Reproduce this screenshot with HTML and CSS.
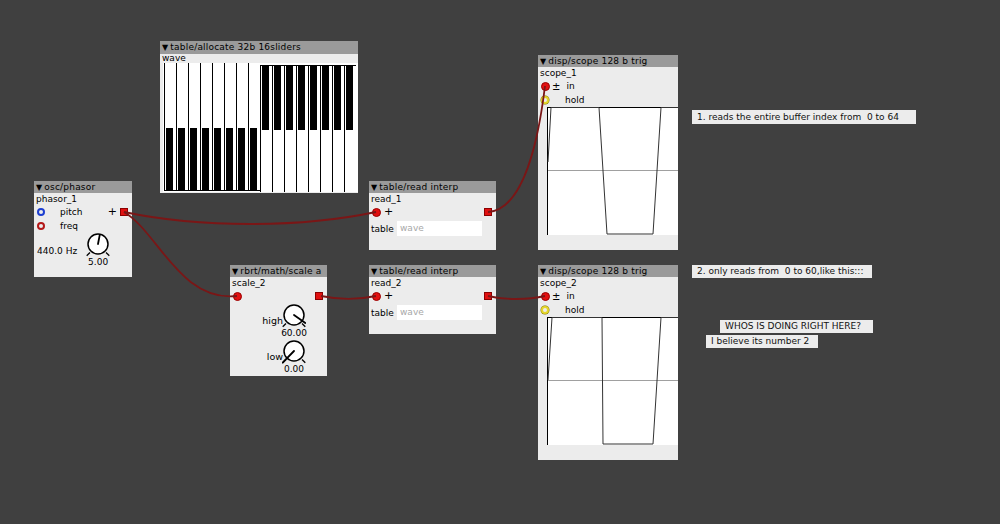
FILE: index.html
```html
<!DOCTYPE html>
<html>
<head>
<meta charset="utf-8">
<link rel="stylesheet" href="styles.css">
</head>
<body>
<div class="canvas">

  <div class="obj n-alloc">
    <div class="hdr"><span class="tri">▼</span>table/allocate 32b 16sliders</div>
    <div class="iname">wave</div>
    <div class="sliders">
      <div class="sl lo"><i></i></div><div class="sl lo"><i></i></div><div class="sl lo"><i></i></div><div class="sl lo"><i></i></div>
      <div class="sl lo"><i></i></div><div class="sl lo"><i></i></div><div class="sl lo"><i></i></div><div class="sl lo"><i></i></div>
      <div class="sl hi"><i></i></div><div class="sl hi"><i></i></div><div class="sl hi"><i></i></div><div class="sl hi"><i></i></div>
      <div class="sl hi"><i></i></div><div class="sl hi"><i></i></div><div class="sl hi"><i></i></div><div class="sl hi"><i></i></div>
    </div>
  </div>

  <div class="obj n-phasor">
    <div class="hdr"><span class="tri">▼</span>osc/phasor</div>
    <div class="iname">phasor_1</div>
    <div class="row">
      <span class="ring blue"></span><span class="lbl">pitch</span>
      <span class="plus">+</span><span class="outlet"></span>
    </div>
    <div class="row">
      <span class="ring red"></span><span class="lbl">freq</span>
    </div>
    <div class="knobrow">
      <span class="val">440.0 Hz</span>
      <div class="knob">
        <svg width="24" height="24" viewBox="0 0 24 24">
          <line x1="0.7" y1="22.7" x2="4" y2="19.5" class="foot"/>
          <line x1="23.3" y1="22.7" x2="20" y2="19.5" class="foot"/>
          <circle cx="12" cy="11" r="10" class="dial"/>
          <line x1="12" y1="11" x2="13.7" y2="2.2" class="tick"/>
        </svg>
        <span class="kval">5.00</span>
      </div>
    </div>
  </div>

  <div class="obj n-read1">
    <div class="hdr"><span class="tri">▼</span>table/read interp</div>
    <div class="iname">read_1</div>
    <div class="row">
      <span class="inlet"></span><span class="plus2">+</span>
      <span class="outlet push"></span>
    </div>
    <div class="trow"><span class="tlbl">table</span><span class="field">wave</span></div>
  </div>

  <div class="obj n-read2">
    <div class="hdr"><span class="tri">▼</span>table/read interp</div>
    <div class="iname">read_2</div>
    <div class="row">
      <span class="inlet"></span><span class="plus2">+</span>
      <span class="outlet push"></span>
    </div>
    <div class="trow"><span class="tlbl">table</span><span class="field">wave</span></div>
  </div>

  <div class="obj n-scale">
    <div class="hdr"><span class="tri">▼</span>rbrt/math/scale a</div>
    <div class="iname">scale_2</div>
    <div class="row">
      <span class="inlet"></span>
      <span class="outlet push"></span>
    </div>
    <div class="kb">
      <span class="klbl">high</span>
      <div class="knob">
        <svg width="24" height="24" viewBox="0 0 24 24">
          <line x1="0.7" y1="22.7" x2="4" y2="19.5" class="foot"/>
          <line x1="23.3" y1="22.7" x2="20" y2="19.5" class="foot"/>
          <circle cx="12" cy="11" r="10" class="dial"/>
          <line x1="12" y1="11" x2="23.3" y2="19" class="tick"/>
        </svg>
        <span class="kval">60.00</span>
      </div>
    </div>
    <div class="kb low">
      <span class="klbl">low</span>
      <div class="knob">
        <svg width="24" height="24" viewBox="0 0 24 24">
          <line x1="0.7" y1="22.7" x2="4" y2="19.5" class="foot"/>
          <line x1="23.3" y1="22.7" x2="20" y2="19.5" class="foot"/>
          <circle cx="12" cy="11" r="10" class="dial"/>
          <line x1="12" y1="11" x2="0.7" y2="22.7" class="tick"/>
        </svg>
        <span class="kval">0.00</span>
      </div>
    </div>
  </div>

  <div class="obj n-scope1">
    <div class="hdr"><span class="tri">▼</span>disp/scope 128 b trig</div>
    <div class="iname">scope_1</div>
    <div class="row">
      <span class="inlet"></span><span class="pm">±</span><span class="lbl2">in</span>
    </div>
    <div class="row">
      <span class="ring yellow"></span><span class="lbl3">hold</span>
    </div>
    <svg class="graph" width="131" height="128" viewBox="0 0 131 128">
      <rect x="0" y="0" width="131" height="128" fill="#fff"/>
      <line x1="0" y1="63.5" x2="131" y2="63.5" stroke="#a0a0a0" stroke-width="1"/>
      <line x1="0" y1="0.5" x2="131" y2="0.5" stroke="#000" stroke-width="1"/>
      <line x1="0.5" y1="0" x2="0.5" y2="128" stroke="#000" stroke-width="1"/>
      <polyline points="1,55 4,0.5 52,0.5 60,127 106,127 114,0.5 131,0.5" fill="none" stroke="#333" stroke-width="1"/>
    </svg>
  </div>

  <div class="obj n-scope2">
    <div class="hdr"><span class="tri">▼</span>disp/scope 128 b trig</div>
    <div class="iname">scope_2</div>
    <div class="row">
      <span class="inlet"></span><span class="pm">±</span><span class="lbl2">in</span>
    </div>
    <div class="row">
      <span class="ring yellow"></span><span class="lbl3">hold</span>
    </div>
    <svg class="graph" width="131" height="128" viewBox="0 0 131 128">
      <rect x="0" y="0" width="131" height="128" fill="#fff"/>
      <line x1="0" y1="63.5" x2="131" y2="63.5" stroke="#a0a0a0" stroke-width="1"/>
      <line x1="0" y1="0.5" x2="131" y2="0.5" stroke="#000" stroke-width="1"/>
      <line x1="0.5" y1="0" x2="0.5" y2="128" stroke="#000" stroke-width="1"/>
      <polyline points="1,63 5,0.5 55,0.5 56,127 106,127 114,0.5 131,0.5" fill="none" stroke="#333" stroke-width="1"/>
    </svg>
  </div>

  <div class="comment c1">1. reads the entire buffer index from&nbsp; 0 to 64</div>
  <div class="comment c2">2. only reads from&nbsp; 0 to 60,like this:::</div>
  <div class="comment c3">WHOS IS DOING RIGHT HERE?</div>
  <div class="comment c4">I believe its number 2</div>

  <svg class="wires" width="1000" height="524" viewBox="0 0 1000 524">
    <path d="M124 212 C200 228, 300 228, 376 212"/>
    <path d="M124 212 C158 232, 180 302, 237 296"/>
    <path d="M321 296 C340 300, 357 300, 376 296"/>
    <path d="M488 212 C518 210, 536 160, 545 86"/>
    <path d="M488 296 C505 300, 528 300, 545 296"/>
  </svg>
</div>
</body>
</html>
```

FILE: styles.css
```css
html, body {
  margin: 0;
  padding: 0;
  background: #404040;
}

.canvas {
  position: relative;
  width: 1000px;
  height: 524px;
  overflow: hidden;
  background: #404040;
  font-family: "DejaVu Sans", "Liberation Sans", sans-serif;
  font-size: 9px;
  color: #000;
}

/* ---------- generic object ---------- */
.obj {
  position: absolute;
  box-sizing: border-box;
  background: #ececec;
  display: flex;
  flex-direction: column;
}

.hdr {
  height: 12px;
  line-height: 12px;
  background: #9a9a9a;
  color: #000;
  padding-left: 2px;
  white-space: nowrap;
  overflow: hidden;
  letter-spacing: 0.2px;
}
.tri { margin-right: 2px; font-size: 8px; }

.iname {
  height: 12px;
  line-height: 12px;
  padding-left: 2px;
  white-space: nowrap;
}

.row {
  height: 14px;
  display: flex;
  align-items: center;
  padding-left: 3px;
  padding-right: 4px;
}

.lbl { margin-left: 15px; }
.plus { margin-left: auto; margin-right: 3px; font-size: 11px; line-height: 14px; }
.plus2 { margin-left: 3px; font-size: 11px; line-height: 14px; }
.push { margin-left: auto; }
.pm { margin-left: 2px; font-size: 10px; }
.lbl2 { margin-left: 6px; }
.lbl3 { margin-left: 16px; }

/* inlets / outlets */
.inlet {
  width: 9px;
  height: 9px;
  box-sizing: border-box;
  border-radius: 50%;
  background: #e21010;
  border: 1px solid #9a0000;
  flex: none;
}
.outlet {
  width: 8px;
  height: 8px;
  box-sizing: border-box;
  background: #e01010;
  border: 1px solid #8c0000;
  flex: none;
}
.ring {
  width: 8px;
  height: 8px;
  box-sizing: border-box;
  border-radius: 50%;
  background: #ececec;
  border: 2px solid #000;
  flex: none;
}
.ring.blue { border-color: #1c3ed0; }
.ring.red { border-color: #b41818; }
.ring.yellow { border-color: #e4d62a; box-shadow: 0 0 0 0.5px #807000; }

/* knobs */
.knob {
  display: flex;
  flex-direction: column;
  align-items: center;
  width: 24px;
}
.knob svg { display: block; }
.dial { fill: #fff; stroke: #000; stroke-width: 1.5; }
.foot { stroke: #000; stroke-width: 1.3; }
.tick { stroke: #000; stroke-width: 1.8; stroke-linecap: round; }
.kval { line-height: 10px; height: 10px; white-space: nowrap; }

.knobrow {
  display: flex;
  align-items: flex-start;
  padding-left: 3px;
}
.val { margin-top: 13px; line-height: 10px; white-space: nowrap; }
.knobrow .knob { margin-left: 9px; }

.kb {
  display: flex;
  justify-content: flex-end;
  align-items: flex-start;
  padding-right: 21px;
  margin-top: 1px;
}
.kb.low { margin-top: 2px; }
.klbl { margin-top: 12px; line-height: 10px; margin-right: -1px; font-size: 9.5px; }

/* table read */
.trow {
  display: flex;
  align-items: center;
  margin-top: 2px;
  height: 15px;
  padding-left: 2px;
}
.tlbl { width: 26px; }
.field {
  width: 85px;
  height: 15px;
  line-height: 15px;
  background: #fff;
  color: #a8a8a8;
  padding-left: 3px;
  box-sizing: border-box;
}

/* scope */
.graph { display: block; margin-left: 9px; }

/* table allocate sliders */
.sliders {
  display: flex;
  margin-left: 3px;
  margin-top: 0;
  height: 129px;
  background: #fff;
  padding-left: 1px;
}
.sl {
  position: relative;
  width: 12px;
  height: 129px;
  box-sizing: border-box;
  border-left: 1px solid #000;
}
.sl i {
  position: absolute;
  left: 1px;
  width: 7px;
  background: #000;
}
.sl.lo { border-bottom: 1px solid #000; height: 128px; }
.sl.lo i { top: 65px; bottom: 0; }
.sl.hi { border-top: 1px solid #000; margin-top: 2px; height: 127px; }
.sl.hi i { top: 0; height: 64px; }

/* placements on the patch canvas */
.n-alloc  { left: 160px; top: 41px;  width: 198px; height: 152px; }
.n-phasor { left: 34px;  top: 181px; width: 98px;  height: 96px; }
.n-read1  { left: 369px; top: 181px; width: 127px; height: 69px; }
.n-read2  { left: 369px; top: 265px; width: 127px; height: 69px; }
.n-scale  { left: 230px; top: 265px; width: 97px;  height: 111px; }
.n-scope1 { left: 538px; top: 55px;  width: 140px; height: 195px; }
.n-scope2 { left: 538px; top: 265px; width: 140px; height: 195px; }

.n-alloc .hdr { height: 13px; line-height: 13px; }
.n-alloc .iname { height: 9px; line-height: 9px; }

/* comments */
.comment {
  position: absolute;
  box-sizing: border-box;
  background: #ececec;
  color: #111;
  height: 13px;
  line-height: 13px;
  padding-left: 5px;
  white-space: nowrap;
}
.c1 { left: 692px; top: 110px; width: 224px; height: 14px; line-height: 14px; }
.c2 { left: 692px; top: 265px; width: 180px; }
.c3 { left: 720px; top: 320px; width: 153px; }
.c4 { left: 706px; top: 335px; width: 112px; }

/* wires */
.wires {
  position: absolute;
  left: 0;
  top: 0;
  pointer-events: none;
}
.wires path {
  fill: none;
  stroke: #7a1616;
  stroke-width: 1.8;
}
```
